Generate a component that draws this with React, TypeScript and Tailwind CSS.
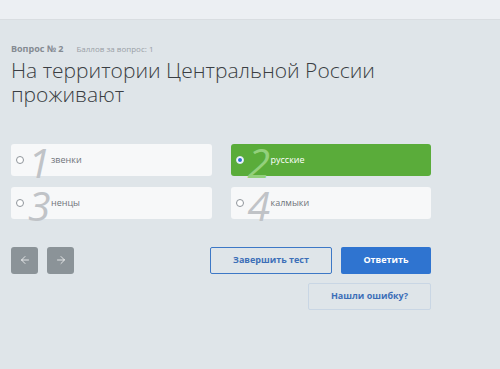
import { ArrowLeft, ArrowRight } from "lucide-react";

const answers = [
  { n: "1", text: "звенки", selected: false },
  { n: "2", text: "русские", selected: true },
  { n: "3", text: "ненцы", selected: false },
  { n: "4", text: "калмыки", selected: false },
];

function Answer({ n, text, selected }: { n: string; text: string; selected: boolean }) {
  return (
    <div
      className={
        selected
          ? "flex h-[32px] items-center rounded-[3px] bg-[#5aac3a] pl-[5px]"
          : "flex h-[32px] items-center rounded-[3px] bg-[#f7f8f9] pl-[5px]"
      }
    >
      <span
        className={
          selected
            ? "flex h-[8px] w-[8px] items-center justify-center rounded-full border border-[#d6e4f5] bg-white"
            : "flex h-[8px] w-[8px] items-center justify-center rounded-full border border-[#8f959b] bg-white"
        }
      >
        {selected && <span className="h-[4px] w-[4px] rounded-full bg-[#2f6fd0]" />}
      </span>
      <span
        className={
          selected
            ? "ml-[4px] mt-[4px] w-[21px] text-[41px] leading-[30px] font-normal italic text-[#93d07c]"
            : "ml-[4px] mt-[4px] w-[21px] text-[41px] leading-[30px] font-normal italic text-[#c0c3c7]"
        }
      >
        {n}
      </span>
      <span className={selected ? "ml-[2px] text-[9px] text-white" : "ml-[2px] text-[9px] text-[#6f747a]"}>
        {text}
      </span>
    </div>
  );
}

export default function App() {
  return (
    <div
      className="flex h-[369px] w-[500px] flex-col bg-[#dfe5e9]"
      style={{ fontFamily: '"Open Sans", sans-serif' }}
    >
      <div className="h-[20px] bg-[#eceff3] border-b border-[#d9dde1]" />
      <div className="px-[11px] pt-[22px]">
        <div className="flex items-baseline gap-[13px]">
          <span className="text-[9px] font-bold text-[#858b92]">Вопрос № 2</span>
          <span className="text-[8px] text-[#9aa0a6]">Баллов за вопрос: 1</span>
        </div>
        <h1 className="mt-[2px] w-[400px] text-[21px] leading-[24px] font-light text-[#3a3e43]">
          На территории Центральной России проживают
        </h1>
        <div className="mt-[38px] grid w-[420px] grid-cols-2 gap-x-[19px] gap-y-[11px]">
          {answers.map((a) => (
            <Answer key={a.n} {...a} />
          ))}
        </div>
        <div className="mt-[28px] flex w-[420px] items-start">
          <div className="flex gap-[9px]">
            <button className="flex h-[27px] w-[27px] items-center justify-center rounded-[3px] bg-[#8b9398] text-white">
              <ArrowLeft size={12} strokeWidth={1.5} />
            </button>
            <button className="flex h-[27px] w-[27px] items-center justify-center rounded-[3px] bg-[#8b9398] text-white">
              <ArrowRight size={12} strokeWidth={1.5} />
            </button>
          </div>
          <div className="ml-auto flex flex-col items-end gap-[9px]">
            <div className="flex gap-[9px]">
              <button className="h-[27px] w-[122px] rounded-[2px] border border-[#3d78c6] text-[9px] font-bold text-[#3d6fb8]">
                Завершить тест
              </button>
              <button className="h-[27px] w-[90px] rounded-[2px] bg-[#2f74d0] text-[9px] font-bold text-white">
                Ответить
              </button>
            </div>
            <button className="h-[27px] w-[123px] rounded-[2px] border border-[#c9d6e4] text-[9px] font-bold text-[#3d6fb8]">
              Нашли ошибку?
            </button>
          </div>
        </div>
      </div>
    </div>
  );
}
